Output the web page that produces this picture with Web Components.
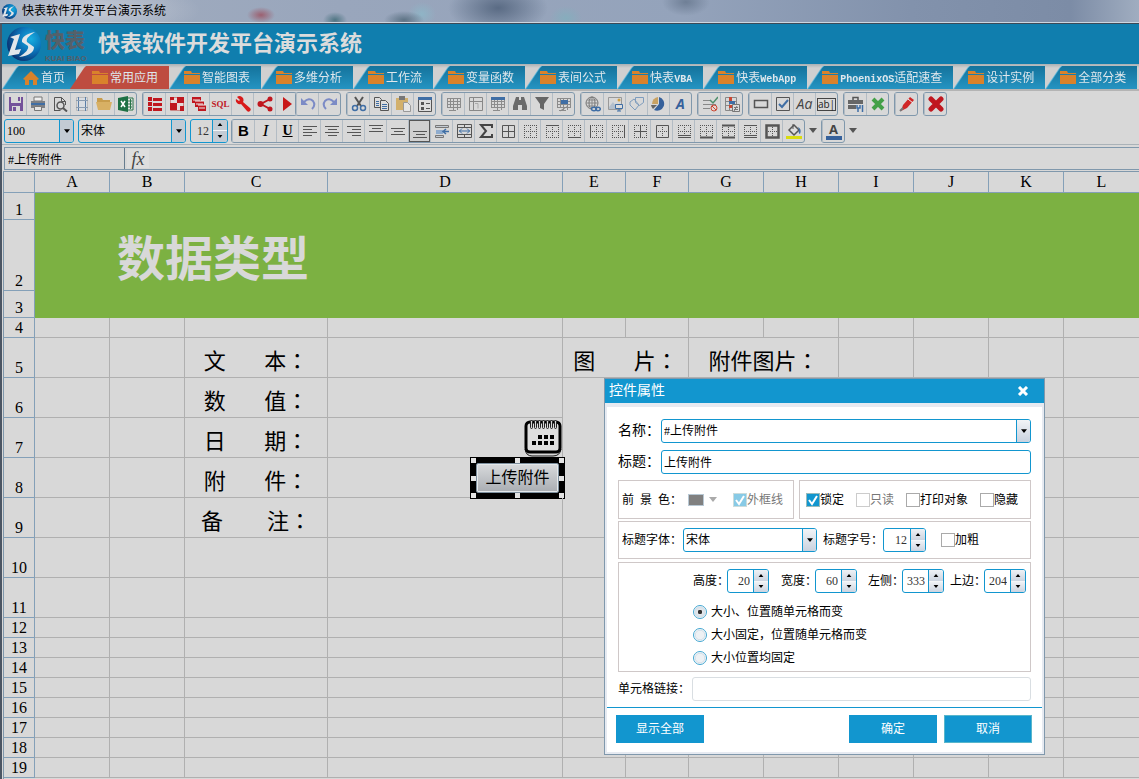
<!DOCTYPE html>
<html lang="zh-CN">
<head>
<meta charset="utf-8">
<title>快表软件开发平台演示系统</title>
<style>
html, body { height: 100%; margin: 0; }
body { background: #d8d8d8; overflow: hidden; font: 12px/16px "Liberation Serif", "Noto Sans CJK SC", sans-serif; color: #000; }
</style>
</head>
<body>
<app-window></app-window>
<script>
const BLUE = '#1296cf', EDGE = '#8098ac', INK = '#555';

const dots = '<path d="M2 2.5h13M2 14.5h13M2.5 2v13M14.5 2v13M2 8.5h13M8.5 2v13" stroke="#555" stroke-dasharray="1 1" fill="none"/>';
const innerDots = '<path d="M4 8.5h9M8.5 4v9" stroke="#555" stroke-dasharray="1 1" fill="none"/>';
const line = (d, w = 1, c = INK) => `<path d="${d}" stroke="${c}" stroke-width="${w}" fill="none"/>`;
const bars = (...d) => line(d.map(([x, y, w]) => `M${x} ${y}.5h${w}`).join(''));
const gridArt = line('M1 2.5h14M1 5.5h14M1 8.5h14M1 11.5h14M3 14.5h7M1.500 2v10M4.500 2v10M7.500 2v12M11.500 2v12M14.500 2v10', 1, '#8c8c8c');

const ICONS = {
  save: '<path d="M1 1h2v6h10V1h2v14H1z" fill="#73519a"/><path d="M4 10h8v5H4z" fill="#d8d8d8"/><path d="M5 11h3v4H5zM10 1h2v4h-2z" fill="#73519a"/>',
  print: '<path d="M4 1h8v4H4z" fill="#eee" stroke="#777"/><path d="M1 5h14v7H1z" fill="#7d8085"/><path d="M1 7h14v2H1z" fill="#3f6ea5"/><path d="M4.500 10.500h7v4h-7z" fill="#e4e4e4" stroke="#777"/>',
  preview: '<path d="M2.500 15V1.500h7l4 4V9M9.500 1.500v4h4M2.500 14.500h6" fill="none" stroke="#555"/><circle cx="8.500" cy="9.500" r="3.500" fill="#d8d8d8" stroke="#555" stroke-width="1.500"/><path d="M11 12l4 3.500" stroke="#555" stroke-width="2"/>',
  margins: '<path d="M2.500 1.500h11v13h-11z" fill="#d9dde2" stroke="#bbb"/><path d="M4.500 1v14M11.500 1v14" stroke="#5b7fa8" fill="none"/><path d="M2 4.500h12M2 11.500h12" stroke="#8a9cb0" fill="none"/>',
  open: '<path d="M1 2h5l1 2h7v4H1z" fill="#c89d4d"/><path d="M0 6h16l-2 8H2z" fill="#d8b064"/>',
  excel: '<path d="M9 2h6v12H9z" fill="#e4e4e4" stroke="#2b7549"/><path d="M10 5h4M10 8h4M10 11h4M12.500 3v10" stroke="#2b7549"/><path d="M0 2l10-2v16L0 14z" fill="#1d7044"/><path d="M3 5l4 6M7 5l-4 6" stroke="#fff" stroke-width="1.500"/>',
  list: '<path d="M1 1h4v4H1zM1 6h4v4H1zM1 11h4v4H1zM6 2h9v3H6zM6 7h9v3H6zM6 12h9v3H6z" fill="#c0171f"/>',
  checker: '<path d="M1.500 1.500h13v13h-13z" fill="#e4dada" stroke="#c88"/><path d="M1 7h7v7H1zM8 1h7v6H8z" fill="#c0171f"/><path d="M1 1h4v3H1zM11 10h4v5h-4z" fill="#c0171f"/>',
  stack: '<path d="M1 1h9v6H1zM4 5h9v6H4zM7 9h8v6H7z" fill="#c0171f"/><path d="M2 4h7M5 8h7M8 12h6M4 5h9M7 9h8" stroke="#eee"/>',
  wrench: '<path d="M2 1a4 4 0 0 1 6 5l7 6a2 2 0 0 1-3 3L6 8a4 4 0 0 1-5-5l3 2 1-1z" fill="#d81a1a"/>',
  share: '<path d="M13 3L4 8l9 5" stroke="#c0171f" stroke-width="2" fill="none"/><circle cx="13" cy="3" r="2.500" fill="#c0171f"/><circle cx="3.500" cy="8" r="3" fill="#c0171f"/><circle cx="13" cy="13" r="2.500" fill="#c0171f"/>',
  play: '<path d="M4 1l9 7-9 7z" fill="#c81818"/>',
  undo: '<path d="M4 6q5-5 9-1 3 4-1 8" stroke="#7c8bc6" stroke-width="2" fill="none"/><path d="M1 2v7h7z" fill="#7c8bc6"/>',
  redo: '<path d="M12 6Q7 1 3 5q-3 4 1 8" stroke="#7c8bc6" stroke-width="2" fill="none"/><path d="M15 2v7H8z" fill="#7c8bc6"/>',
  cut: '<path d="M4 1l6 9M12 1L6 10" stroke="#555" stroke-width="2"/><circle cx="4" cy="12" r="2.500" fill="none" stroke="#3f6ea5" stroke-width="1.500"/><circle cx="12" cy="12" r="2.500" fill="none" stroke="#3f6ea5" stroke-width="1.500"/>',
  copy: '<path d="M1.500 1.500h5l2 2v8h-7z" fill="#ddd" stroke="#555"/><path d="M3 5.500h3M3 7.500h3M3 9.500h3" stroke="#3f6ea5"/><path d="M7.500 4.500h5l3 3v7h-8z" fill="#ddd" stroke="#555"/><path d="M9 8.500h5M9 10.500h5M9 12.500h5" stroke="#3f6ea5"/>',
  paste: '<path d="M1 2h12v12H1z" fill="#d2b06c"/><path d="M4 0h6v4H4z" fill="#777"/><path d="M8.500 6.500h4l3 3v6h-7z" fill="#e6e6e6" stroke="#999"/>',
  props: '<path d="M1.500 1.500h13v14h-13z" fill="#ddd" stroke="#555"/><path d="M1 1h14v3H1z" fill="#3f6ea5"/><path d="M4 6h3v3H4zM4 11h3v3H4z" fill="#555"/><path d="M9 7.500h4M9 12.500h4" stroke="#555"/>',
  table1: gridArt,
  table2: line('M1.500 1.500h13v13h-13zM5.500 1v14M1 5.500h14', 1, '#888') + line('M7 7.500h3v5', 1, '#aaa'),
  table3: gridArt + '<path d="M1 1h14v3H1z" fill="#3f6ea5"/>',
  find: '<path d="M4 1h3v3h2V1h3l3 9v4h-5v-5H6v5H1v-4z" fill="#6a6a6a"/>',
  filter: '<path d="M1 1h14L10 8v6l-4-2V8z" fill="#666"/>',
  pivot: gridArt + '<path d="M5 4h7v4H5z" fill="#3f6ea5"/><path d="M4 15l8-5" stroke="#888"/>',
  globe: '<circle cx="7" cy="7" r="6" fill="none" stroke="#777"/><path d="M1 7h12M7 1v12M2 4h10M2 10h9" stroke="#888" fill="none"/><ellipse cx="7" cy="7" rx="3" ry="6" fill="none" stroke="#777"/><ellipse cx="9" cy="13" rx="2.500" ry="1.700" fill="#d8d8d8" stroke="#3f6ea5" stroke-width="1.500"/><ellipse cx="13" cy="13" rx="2.300" ry="1.700" fill="none" stroke="#3f6ea5" stroke-width="1.500"/>',
  image: '<path d="M1.500 1.500h13v12h-13z" fill="none" stroke="#999"/><path d="M2 11l4-5 5 7H2z" fill="#b3bfcc"/><circle cx="12" cy="4" r="1.500" fill="#d0a040"/><path d="M8.500 8.500h7v4h-7zM10 15h4M12 13v2" fill="#ddd" stroke="#3f6ea5"/>',
  shapes: '<path d="M6.500 1.500h8v5l-4 3-4-3z" fill="none" stroke="#7e9cbd"/><path d="M1 6l4-3 5 6-4 5-5-5z" fill="none" stroke="#7e9cbd"/>',
  pie: '<path d="M7 8V1a7 7 0 0 0-6 7z" fill="#c9a262"/><path d="M6 9H0a7 7 0 0 0 2 4z" fill="#666"/><path d="M8 8V1a7 7 0 1 1-5 13z" fill="#36619b"/>',
  checks: '<path d="M1 4.500h7M1 8.500h13M1 12.500h7" stroke="#888"/><path d="M8 4l3 3 5-6" stroke="#4f8f6c" stroke-width="1.500" fill="none"/><circle cx="12" cy="12" r="3" fill="#e5d8d4" stroke="#c94733"/><path d="M10 10l4 4" stroke="#c94733"/>',
  condfmt: '<path d="M1.500 1.500h11v13h-11zM1 5.500h12M1 9.500h12M5.500 1v14" fill="none" stroke="#888"/><path d="M5 1h3v4H5z" fill="#c94733"/><path d="M5 5h6v3H5z" fill="#3f6ea5"/><path d="M5 9h5v3H5z" fill="#c94733"/><path d="M8.500 8.500h7v7h-7z" fill="#ddd" stroke="#777"/><path d="M10 11.500h4M10 13.500h4M13 10l-3 5" stroke="#777"/>',
  rect: '<path d="M1.500 4.500h13v7h-13z" fill="none" stroke="#555" stroke-width="1.500"/>',
  check: '<path d="M1.500 1.500h13v13h-13z" fill="none" stroke="#555"/><path d="M4 8l3 3 6-7" stroke="#3f6ea5" stroke-width="2" fill="none"/>',
  toolbox: '<path d="M5 4V1.500h5V4" fill="none" stroke="#555" stroke-width="1.500"/><path d="M0 4h15v9H0z" fill="#666"/><path d="M0 8.500h15" stroke="#ddd"/><path d="M8 9h8v7H8z" fill="#d8d8d8"/><path d="M10 16v-4M9 9v3h3V9M14.500 16V9" stroke="#3f6ea5" stroke-width="1.500" fill="none"/>',
  greenx: '<path d="M3 3l10 10M13 3L3 13" stroke="#43a047" stroke-width="4"/>',
  redx: '<path d="M3 3l10 10M13 3L3 13" stroke="#c0171f" stroke-width="5" stroke-linecap="round"/>',
  pen: '<path d="M2 15l2-6 7-8 4 3-7 8z" fill="#d02626"/><path d="M9 3l5 4" stroke="#eee"/><path d="M1 15l3-3" stroke="#777" stroke-width="2"/>',
  left: bars([1, 3, 14], [1, 6, 9], [1, 9, 14], [1, 12, 9]),
  center: bars([1, 3, 14], [4, 6, 9], [1, 9, 14], [4, 12, 9]),
  right: bars([1, 3, 14], [6, 6, 9], [1, 9, 14], [6, 12, 9]),
  top: bars([1, 2, 14], [4, 5, 9], [1, 8, 14]),
  middle: bars([1, 5, 14], [4, 8, 9], [1, 11, 14]),
  bottom: bars([1, 8, 14], [4, 11, 9], [1, 14, 14]),
  autofit: '<path d="M1.500 2.500h13v2h-13zM1.500 12.500h8v2h-8z" fill="#c5cbd3" stroke="#777"/><path d="M2 7h7v4H2z" fill="#8facce"/><path d="M15 8.500h-5M12 6l-3 2.500 3 2.500" stroke="#3f6ea5" fill="none" stroke-width="1.500"/>',
  merge: line('M1.500 1.500h14v13h-14zM1 4.500h14M1 11.500h14M8.500 1v3M8.500 11v4') + '<path d="M3 8h11M6 5.500L3.500 8 6 10.500M11 5.500L13.500 8 11 10.500" stroke="#3f6ea5" fill="none"/>',
  sigma: '<path d="M14 5V2H3l5 6-5 6h11v-3" stroke="#444" stroke-width="2" fill="none"/>',
  all: line('M2.500 2.500h12v12h-12zM2 8.500h12M8.500 2v12'),
  bNone: dots, bTop: dots + line('M2 2.500h13'), bBottom: dots + line('M2 14.500h13'), bLeft: dots + line('M2.500 2v13'),
  bRight: dots + line('M14.500 2v13'), bInner: dots + line('M2 8.500h13M8.500 2v13'), bOuter: innerDots + line('M2.500 2.500h12v12h-12z'),
  bDouble: dots + line('M2 12.500h13M2 14.500h13'), bThick: dots + line('M2 14.500h13', 2),
  bTopThick: dots + line('M2 2.500h13M2 14.500h13', 2), bTopDouble: dots + line('M2 2.500h13M2 12.500h13M2 14.500h13'), bBox: innerDots + line('M2.500 2.500h12v12h-12z', 2.500),
  fill: '<path d="M3 7l5-5 5 5-5 5z" fill="#ddd" stroke="#555" stroke-width="1.500"/><path d="M7 6V1" stroke="#555"/><path d="M12 4q4 2 2 7-2-1-1-4z" fill="#3f6ea5"/><path d="M0 13h16v3H0z" fill="#d9dc10"/>',
};
const TEXT_ICONS = {
  sql: ['SQL', 'font:bold 9px/16px "Liberation Serif",serif;color:#c0171f'],
  wordart: ['A', 'font:italic bold 14px/18px "Open Sans",sans-serif;color:#36619b'],
  aa: ['Aa', 'font:italic 14px/18px "Open Sans",sans-serif;color:#444'],
  edit: ['ab|', 'font:10px/11px "Open Sans",sans-serif;color:#222;border:1px solid #444'],
  bold: ['B', 'font:bold 15px/20px "Liberation Sans",sans-serif'],
  italic: ['I', 'font:italic 17px/20px "Liberation Serif",serif'],
  underline: ['U', 'font:bold 14px/20px "Liberation Serif",serif;text-decoration:underline'],
  fontcolor: ['A', 'font:bold 13px/14px "Open Sans",sans-serif;color:#444;border-bottom:4px solid #36619b;width:16px'],
};

function define(name, render) {
  customElements.define(name, class extends HTMLElement {
    connectedCallback() {
      if (this.shadowRoot) return;
      const t = document.createElement('template');
      t.innerHTML = render(k => this.getAttribute(k), this);
      this.attachShadow({ mode: 'open' }).append(t.content.cloneNode(true));
    }
  });
}

const RESET = '*{box-sizing:border-box}label{white-space:nowrap}button,input,select{font:inherit;color:inherit;margin:0;padding:0;border:0;background:none;border-radius:0;outline:0;min-width:0}';
const TRI = '<svg width="8" height="5" viewBox="0 0 8 5" aria-hidden="true"><path d="M0 0h8L4 5z" fill="currentColor"/></svg>';

define('brand-mark', a => `<style>:host{display:block;flex:none;width:${a('size')}px;height:${a('size')}px}svg{display:block}</style>
<svg width="100%" height="100%" viewBox="0 0 34 34" aria-hidden="true"><defs><radialGradient id="g" cx="70%" cy="35%" r="75%"><stop offset="0" stop-color="#18aee0"/><stop offset=".5" stop-color="#0b73b8"/><stop offset="1" stop-color="#0a2f6e"/></radialGradient></defs>
<circle cx="17" cy="17" r="17" fill="url(#g)"/><path d="M3 10l10-3-5 16 6-1-2 5-11 2 6-17z" fill="#e2e6ea"/><path d="M28 5q-14 3-13 10l6 4q2 4-9 11 15-2 15-10l-7-5q-2-4 8-10z" fill="#e2e6ea"/></svg>`);

define('tab-item', a => `<style>${RESET}
:host{display:block;flex:none;position:relative;height:23px;margin-right:1px;filter:drop-shadow(-1px 0 0 #5cb5d8)}
:host([active]){margin-left:-7px;z-index:1;filter:none}
a{display:flex;align-items:center;gap:2px;height:100%;padding:0 11px 0 ${a('icon') ? 20 : 14}px;color:#dfe7ec;text-decoration:none;white-space:nowrap;background:linear-gradient(#14739c,#2594c2);clip-path:polygon(0 100%,14px 2px,16px 0,100% 0,100% 100%)}
:host([active]) a{background:#be4c40;padding-left:22px}
svg{flex:none}::slotted(span){font:bold 10px "Liberation Mono",monospace}</style>
<a href="#"><svg width="16" height="16" viewBox="0 0 16 16" aria-hidden="true">${a('icon') ? '<path d="M0 9l8-8 8 8-2 1v5h-4v-5H6v5H2v-5z" fill="#d9822b"/>' : '<path d="M0 1h7l1 2h8v1H0zM0 5h16v9H0z" fill="#d9822b"/>'}</svg><b style="font-weight:400"><slot></slot></b></a>`);

define('tool-button', a => {
  const n = a('icon'), t = TEXT_ICONS[n];
  return `<style>${RESET}:host{display:block;box-sizing:border-box;width:22px;height:22px;border-left:1px solid #b3bcc4}:host(:first-child){border-left-color:transparent}
button{display:flex;width:100%;height:100%;align-items:center;justify-content:center}:host([pressed]) button{outline:1px solid #555;outline-offset:-1px;background:#d0d0d0}
svg{display:block;flex:none}span{display:block;${t ? t[1] : ''}}</style>
<button type="button" aria-label="${n}">${t ? `<span>${t[0]}</span>` : `<svg width="16" height="16" viewBox="0 0 16 16" aria-hidden="true">${ICONS[n]}</svg>`}</button>`;
});

define('tool-group', a => `<style>:host{display:flex;flex:none;border:1px solid ${EDGE};border-radius:3px}:host([joined]){border-right:0;margin-right:-7px}</style>
${a('icons').split(' ').map(n => `<tool-button icon="${n}"${n === 'bottom' ? ' pressed' : ''}></tool-button>`).join('')}`);

define('drop-arrow', () => `<style>${RESET}:host{display:block;flex:none}button{display:flex;width:14px;height:24px;align-items:center;justify-content:center;color:#555}</style><button type="button" aria-label="更多">${TRI}</button>`);

define('combo-field', a => `<style>${RESET}:host{display:flex;align-items:center;height:24px}
label{flex:none;width:var(--label-width,auto);font-size:var(--label-size,12px)}
div{display:flex;flex:1;height:100%;border:1px solid ${BLUE};border-radius:3px;overflow:hidden;background:var(--field,#fff)}
select{flex:1;appearance:none;padding-left:2px;height:100%}
i{display:flex;flex:none;width:14px;align-items:center;justify-content:center;border-left:1px solid ${BLUE};background:linear-gradient(#f2f4f7,#c9d2df)}
i svg{width:6px;height:4px}
:host([bar]) i{background:#c3cbd4}</style>
${a('label') ? `<label for="f">${a('label')}</label>` : ''}<div><select id="f" aria-label="${a('label') || a('hint')}"><option>${a('value')}</option></select><i>${TRI}</i></div>`);

define('text-field', a => `<style>${RESET}:host{display:flex;align-items:center;height:24px}
label{flex:none;width:var(--label-width,auto);font-size:var(--label-size,12px)}
input{flex:1;height:100%;padding:0 2px;border:1px solid ${BLUE};border-radius:3px;background:#fff}:host([plain]) input{border-color:#d9dee2}</style>
<label for="f">${a('label')}</label><input id="f" type="text" value="${a('value') || ''}">`);

define('spin-field', a => `<style>${RESET}:host{display:flex;align-items:center;height:24px}
label{flex:none;width:var(--label-width,auto)}
div{position:relative;display:flex;flex:none;width:var(--spin,42px);height:100%;border:1px solid ${BLUE};border-radius:3px;overflow:hidden;background:var(--field,#fff)}
input{flex:1;width:0;text-align:right;padding-right:3px;color:#333}
p{display:flex;flex-direction:column;flex:none;width:15px;margin:0;border-left:1px solid ${BLUE}}
button{display:flex;flex:1;align-items:center;justify-content:center;background:linear-gradient(#eef1f5,#ccd4e0)}button+button{border-top:1px solid #f4f6f8}
:host([bar]) button{background:#c3cbd4}svg{width:6px;height:3px}button:first-child svg{transform:rotate(180deg)}</style>
${a('label') ? `<label for="f">${a('label')}</label>` : ''}<div><input id="f" type="text" aria-label="${a('label') || a('hint')}" value="${a('value')}"><p><button type="button" aria-label="增加">${TRI}</button><button type="button" aria-label="减少">${TRI}</button></p></div>`);

define('check-field', a => `<style>${RESET}:host{display:flex;align-items:center;white-space:nowrap}:host([off]){color:#777}
input{appearance:none;flex:none;width:14px;height:14px;border:1px solid #aaa;background:#fff}
input:disabled{border-color:#ccc}
input:checked{border-color:#9bb;background:${BLUE} url("data:image/svg+xml,%3Csvg xmlns='http://www.w3.org/2000/svg' viewBox='0 0 12 12'%3E%3Cpath d='M2 6l3 4 5-8' stroke='white' stroke-width='2' fill='none'/%3E%3C/svg%3E")}
input:checked:disabled{opacity:.5}</style>
<input id="f" type="checkbox"${a('on') !== null ? ' checked' : ''}${a('off') !== null ? ' disabled' : ''}><label for="f"><slot></slot></label>`);

define('radio-list', a => `<style>${RESET}:host{display:grid;gap:7px}div{display:flex;align-items:center;gap:4px}
input{appearance:none;width:14px;height:14px;border:1px solid #42a5d0;border-radius:50%;background:radial-gradient(#eef1f4 45%,#d5dfe8 55%,#fff 70%)}
input:checked{background:radial-gradient(#333 22%,#e4e8ec 30%,#d5dfe8 60%,#fff 70%)}</style>
${a('options').split('|').map((t, i) => `<div><input type="radio" name="r" id="r${i}"${i ? '' : ' checked'}><label for="r${i}">${t}</label></div>`).join('')}`);

define('push-button', () => `<style>${RESET}:host{display:block}button{display:block;width:88px;height:28px;background:${BLUE};color:#fff;border:1px solid ${BLUE}}:host([outlined]) button{border-color:#58b6cc}</style><button type="button"><slot></slot></button>`);

define('group-box', () => `<style>:host{display:flex;align-items:center;box-sizing:border-box;border:1px solid #cfc8c8}</style><slot></slot>`);

define('prop-dialog', () => `<style>${RESET}
:host{display:block;width:441px;box-sizing:border-box;border:1px solid ${EDGE};background:#e6eaf1}
header{display:flex;align-items:center;justify-content:space-between;height:24px;padding:0 15px 0 4px;background:${BLUE};color:#fff;font-size:14px}
h2{margin:0;font:inherit}header button{display:flex}
.body{margin:4px 2px 0;padding:12px 11px 6px;background:#fff;display:flex;flex-direction:column}
.wide{--label-width:43px;--label-size:14px}
.title{margin:7px 0 6px}
.row{display:flex;gap:5px}
.color{width:176px;height:39px;padding-left:3px}
.swatch{width:16px;height:12px;margin-left:6px;border:1px solid #b8c8d4;background:#808080}
.color svg{margin:0 16px 0 5px;color:#aaa}
.flags{flex:1;padding-left:6px;gap:12px}
.face{height:38px;margin:2px 0 3px;padding-left:3px}
.face combo-field{--label-width:61px;width:195px;margin-right:6px}.face spin-field{--label-width:60px;margin-right:15px;--spin:43px}
.place{height:110px;display:block;padding:6px 3px 0 74px}
.sizes{display:grid;grid-template-columns:88px 87px 82px 76px;--label-width:34px;margin-bottom:11px}
.link{--label-width:74px;margin-top:5px}
footer{display:flex;gap:7px;margin:0 2px 2px;padding:7px 10px 9px 9px;background:#fff;border-top:1px solid ${BLUE}}
footer :first-child{margin-right:auto}</style>
<header><h2>控件属性</h2><button type="button" aria-label="关闭"><svg width="12" height="10" viewBox="0 0 12 10"><path d="M2 1l8 8M10 1L2 9" stroke="#fff" stroke-width="3"/></svg></button></header>
<div class="body">
<combo-field class="wide" label="名称：" value="#上传附件"></combo-field>
<text-field class="wide title" label="标题：" value="上传附件"></text-field>
<div class="row"><group-box class="color"><span style="white-space:pre">前  景  色：</span><span class="swatch"></span><svg width="8" height="5" viewBox="0 0 8 5" aria-hidden="true"><path d="M0 0h8L4 5z" fill="currentColor"/></svg><check-field on off>外框线</check-field></group-box>
<group-box class="flags"><check-field on>锁定</check-field><check-field off>只读</check-field><check-field>打印对象</check-field><check-field>隐藏</check-field></group-box></div>
<group-box class="face"><combo-field label="标题字体：" value="宋体"></combo-field><spin-field label="标题字号：" value="12"></spin-field><check-field>加粗</check-field></group-box>
<group-box class="place"><div class="sizes"><spin-field label="高度：" value="20"></spin-field><spin-field label="宽度：" value="60"></spin-field><spin-field label="左侧：" value="333"></spin-field><spin-field label="上边：" value="204"></spin-field></div>
<radio-list options="大小、位置随单元格而变|大小固定，位置随单元格而变|大小位置均固定"></radio-list></group-box>
<text-field class="link" plain label="单元格链接："></text-field>
</div>
<footer><push-button>显示全部</push-button><push-button>确定</push-button><push-button outlined>取消</push-button></footer>`);

define('calendar-icon', () => `<style>:host{display:block;width:38px;height:38px;margin-left:auto}svg{display:block}</style>
<svg width="38" height="38" viewBox="0 0 38 38" aria-hidden="true"><path d="M1 30q1 7 7 7h21q7 0 8-7" fill="none" stroke="#111"/><rect x="2" y="3" width="34" height="30" rx="4" fill="#dedede" stroke="#000" stroke-width="3"/>
<g fill="#d8d8d8" stroke="#222">${[0, 1, 2, 3, 4, 5, 6].map(i => `<rect x="${6 + i * 4}.5" y="1.500" width="2" height="8" rx="1"/>`).join('')}</g>
<path d="M14 16h4v4h-4zM20 16h4v4h-4zM26 16h4v4h-4zM8 22h4v4H8zM14 22h4v4h-4zM20 22h4v4h-4zM26 22h4v4h-4z" fill="#000"/></svg>`);

define('selected-object', () => `<style>${RESET}:host{display:grid;grid-template:repeat(3,auto)/repeat(3,auto);justify-content:space-between;align-content:space-between;width:95px;height:42px;padding:1px;background:#000;box-sizing:border-box}
i{width:5px;height:5px;background:#e4e4e4}i.gap{background:none}
button{position:absolute;inset:6px;border:1px solid #7d8f9e;border-radius:2px;background:linear-gradient(#d8dadc,#a9adb2);box-shadow:inset 0 0 0 1px #e4e8ea;font-size:16px;line-height:24px;white-space:nowrap}</style>
<i></i><i></i><i></i><i></i><i class="gap"></i><i></i><i></i><i></i><i></i><button type="button"><slot></slot></button>`);

const COLS = 'ABCDEFGHIJKL'.split('');
const WIDTHS = [75, 75, 143, 235, 63, 63, 75, 75, 75, 75, 75];
const HEIGHTS = [27, 71, 27, 20, 40, 40, 40, 40, 40, 40, 40];
const COLON = '<span lang="zh-TW">：</span>';
const pair = (a, b, gap = '　   ') => `${a}${gap}${b}${COLON}`;
const CELLS = {
  C5: pair('文', '本'), C6: pair('数', '值'), C7: pair('日', '期'), C8: pair('附', '件'), C9: pair('备', '注', '　    '),
  E5: [2, 1, pair('图', '片')], G5: [2, 1, '附件图片' + COLON], E6: [2, 4, ''],
  D7: '<calendar-icon></calendar-icon>', D8: '<selected-object>上传附件</selected-object>',
};
const SKIP = new Set(['F5', 'H5', 'E7', 'E8', 'E9', 'F6', 'F7', 'F8', 'F9']);
function sheetRow(r) {
  let cells;
  if (r <= 3) cells = `<td class="green" colspan="12">${r === 2 ? '数据类型' : ''}</td>`;
  else cells = COLS.filter(c => !SKIP.has(c + r)).map(c => {
    const v = CELLS[c + r] ?? '';
    return Array.isArray(v) ? `<td colspan="${v[0]}" rowspan="${v[1]}">${v[2]}</td>` : `<td${c === 'D' ? ' class="obj"' : ''}>${v}</td>`;
  }).join('');
  return `<tr style="height:${HEIGHTS[r - 1] || 20}px"><th scope="row">${r}</th>${cells}</tr>`;
}
define('data-sheet', () => `<style>${RESET}
:host{display:block;flex:1;min-height:0;overflow:hidden;margin:1px 0 0 1px;border-left:1px solid ${EDGE};border-top:1px solid ${EDGE}}
table{width:100%;table-layout:fixed;border-collapse:separate;border-spacing:0}
th,td{padding:0;border:solid #b0b0b0;border-width:0 1px 1px 0}
th{border-color:#84a0b8;font:16px/18px "Liberation Serif",serif;vertical-align:bottom}
thead tr{height:21px}thead th{vertical-align:middle}thead th:last-child,td:last-child{border-right:0}
td{font-size:22px;line-height:28px;text-align:center;white-space:pre;padding-top:6px}
tr td:empty{padding:0}td span{font-family:"Noto Sans CJK TC",sans-serif}
td.obj{position:relative;padding:0;white-space:normal}
selected-object{position:absolute;right:-3px;top:-1px}
td.green{background:#7cb142;border-color:#7cb142;color:#d8d8d8;font:bold 48px/60px "Noto Sans CJK SC",sans-serif;text-align:left;padding:0 0 0 82px}</style>
<table><colgroup><col style="width:31px">${WIDTHS.map(w => `<col style="width:${w}px">`).join('')}<col></colgroup>
<thead><tr><th></th>${COLS.map(c => `<th scope="col">${c}</th>`).join('')}</tr></thead>
<tbody>${Array.from({ length: 19 }, (_, i) => sheetRow(i + 1)).join('')}</tbody></table>`);

define('formula-bar', () => `<style>${RESET}:host{display:flex;height:23px;margin:2px 0 0 2px;border:1px solid ${EDGE};border-right:0}
input{height:100%;padding:0 3px}.name{width:120px;border-right:1px solid #667c8e}.formula{flex:1}
button{width:22px;margin:1px 0 1px 2px;background:#dedede;color:#444;font:italic 18px/18px "Liberation Serif",serif}</style>
<input class="name" aria-label="名称框" value="#上传附件"><button type="button" aria-label="插入函数">fx</button><input class="formula" aria-label="公式">`);

define('app-window', () => `<style>${RESET}
:host{display:flex;flex-direction:column;height:100vh;position:relative;overflow:hidden}
.caption{display:flex;align-items:center;gap:5px;height:23px;flex:none;padding-left:2px;border-bottom:1px solid #cdd6e0;background:
radial-gradient(ellipse 14px 8px at 261px 15px,#9c6070,transparent),
radial-gradient(ellipse 12px 8px at 335px 20px,#4f7583,transparent),
radial-gradient(ellipse 20px 9px at 404px 20px,#5d7385,transparent),
radial-gradient(ellipse 14px 12px at 422px 14px,#8fb4c6,transparent),
radial-gradient(ellipse 50px 26px at 498px 8px,#5a6b84,transparent),
radial-gradient(ellipse 16px 12px at 566px 18px,#86adbd,transparent),
radial-gradient(ellipse 24px 14px at 686px 2px,#6f7f96,transparent),
radial-gradient(ellipse 110px 30px at 90px 10px,#c5cbd6,transparent),
linear-gradient(90deg,#a2adbf,#99a6bc 30%,#94a3bb 60%,#8292ac 80%,#7c8ca6 94%,#a0adc0)}
.frame{display:flex;flex-direction:column;flex:1;min-height:0;border-left:2px solid #4c5664;border-top:1px solid #3c4a58}
.banner{display:flex;align-items:center;flex:none;height:40px;padding-left:5px;background:#107eae;color:#dcdcdc}
.word{margin:0 7px 0 4px;width:46px;color:#55606a;font:900 20px/29px "Noto Sans CJK SC",sans-serif}
.word small{display:block;font:bold 8px/9px "Liberation Sans",sans-serif;white-space:nowrap}
h1{margin:0;font-size:22px;line-height:30px;font-weight:600}
nav{display:flex;flex:none;height:27px;padding:2px 0 0 1px;overflow:hidden;background:linear-gradient(#a8b0b4,#d0d0d0 4px);border-bottom:2px solid #b4b4b4}
.bar{display:flex;align-items:center;gap:5px;flex:none;padding-left:1px;height:26px}
.bar+.bar{gap:4px;padding-left:2px;height:27px;--field:#d8d8d8}
hr{flex:none;width:100%;margin:0;border:0;height:1px;background:#aab2b8}
.bar drop-arrow{margin:0 -3px}.zoom{width:70px}.font{width:108px}.bar spin-field{--spin:38px;margin-right:-1px}
prop-dialog{position:absolute;left:604px;top:378px}</style>
<div class="caption"><brand-mark size="15"></brand-mark><span>快表软件开发平台演示系统</span></div>
<div class="frame">
<div class="banner"><brand-mark size="34"></brand-mark><div class="word">快表<small>KUAI BIAO</small></div><h1>快表软件开发平台演示系统</h1></div>
<nav><tab-item icon="home">首页</tab-item><tab-item active>常用应用</tab-item><tab-item>智能图表</tab-item><tab-item>多维分析</tab-item><tab-item>工作流</tab-item><tab-item>变量函数</tab-item><tab-item>表间公式</tab-item><tab-item>快表<span>VBA</span></tab-item><tab-item>快表<span>WebApp</span></tab-item><tab-item><span>PhoenixOS</span>适配速查</tab-item><tab-item>设计实例</tab-item><tab-item>全部分类</tab-item></nav>
<div class="bar"><tool-group icons="save print preview margins open excel"></tool-group><tool-group joined icons="list checker stack sql wrench share play"></tool-group><tool-group icons="undo redo"></tool-group><tool-group icons="cut copy paste props"></tool-group><tool-group icons="table1 table2 table3 find filter pivot"></tool-group><tool-group icons="globe image shapes pie wordart"></tool-group><tool-group icons="checks condfmt"></tool-group><tool-group icons="rect check aa edit"></tool-group><tool-group icons="toolbox greenx"></tool-group><tool-group icons="pen"></tool-group><tool-group icons="redx"></tool-group></div>
<div class="bar"><combo-field bar class="zoom" hint="缩放" value="100"></combo-field><combo-field bar class="font" hint="字体" value="宋体"></combo-field><spin-field bar hint="字号" value="12"></spin-field><tool-group icons="bold italic underline left center right top middle bottom autofit merge sigma all bNone bTop bBottom bLeft bRight bInner bOuter bDouble bThick bTopThick bTopDouble bBox fill"></tool-group><drop-arrow></drop-arrow><tool-group icons="fontcolor"></tool-group><drop-arrow></drop-arrow></div>
<hr>
<formula-bar></formula-bar>
<data-sheet></data-sheet>
</div>
<prop-dialog role="dialog" aria-label="控件属性"></prop-dialog>`);
</script>
</body>
</html>
